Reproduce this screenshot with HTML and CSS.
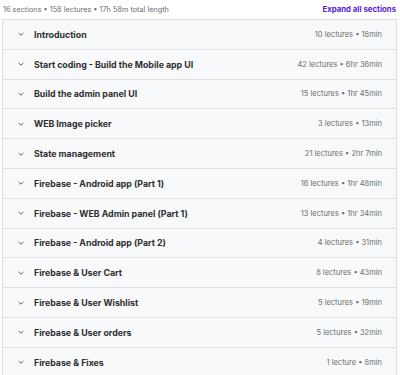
FILE: index.html
```html
<!DOCTYPE html>
<html lang="en">
<head>
    <meta charset="UTF-8">
    <title>Course content</title>
    <link rel="stylesheet" href="styles.css">
</head>
<body>
<div class="curriculum">
    <div class="summary">
        <span>16 sections • 158 lectures • 17h 58m total length</span>
        <button class="expand-all">Expand all sections</button>
    </div>
    <div class="sections">
        <div class="section"><span class="chevron"><svg viewBox="0 0 10 10"><path d="M2.6 4 L5 6.2 L7.4 4"/></svg></span><span class="title">Introduction</span><span class="meta">10 lectures • 18min</span></div>
        <div class="section"><span class="chevron"><svg viewBox="0 0 10 10"><path d="M2.6 4 L5 6.2 L7.4 4"/></svg></span><span class="title">Start coding - Build the Mobile app UI</span><span class="meta">42 lectures • 6hr 36min</span></div>
        <div class="section"><span class="chevron"><svg viewBox="0 0 10 10"><path d="M2.6 4 L5 6.2 L7.4 4"/></svg></span><span class="title">Build the admin panel UI</span><span class="meta">15 lectures • 1hr 45min</span></div>
        <div class="section"><span class="chevron"><svg viewBox="0 0 10 10"><path d="M2.6 4 L5 6.2 L7.4 4"/></svg></span><span class="title">WEB Image picker</span><span class="meta">3 lectures • 13min</span></div>
        <div class="section"><span class="chevron"><svg viewBox="0 0 10 10"><path d="M2.6 4 L5 6.2 L7.4 4"/></svg></span><span class="title">State management</span><span class="meta">21 lectures • 2hr 7min</span></div>
        <div class="section"><span class="chevron"><svg viewBox="0 0 10 10"><path d="M2.6 4 L5 6.2 L7.4 4"/></svg></span><span class="title">Firebase - Android app (Part 1)</span><span class="meta">16 lectures • 1hr 48min</span></div>
        <div class="section"><span class="chevron"><svg viewBox="0 0 10 10"><path d="M2.6 4 L5 6.2 L7.4 4"/></svg></span><span class="title">Firebase - WEB Admin panel (Part 1)</span><span class="meta">13 lectures • 1hr 34min</span></div>
        <div class="section"><span class="chevron"><svg viewBox="0 0 10 10"><path d="M2.6 4 L5 6.2 L7.4 4"/></svg></span><span class="title">Firebase - Android app (Part 2)</span><span class="meta">4 lectures • 31min</span></div>
        <div class="section"><span class="chevron"><svg viewBox="0 0 10 10"><path d="M2.6 4 L5 6.2 L7.4 4"/></svg></span><span class="title">Firebase &amp; User Cart</span><span class="meta">8 lectures • 43min</span></div>
        <div class="section"><span class="chevron"><svg viewBox="0 0 10 10"><path d="M2.6 4 L5 6.2 L7.4 4"/></svg></span><span class="title">Firebase &amp; User Wishlist</span><span class="meta">5 lectures • 19min</span></div>
        <div class="section"><span class="chevron"><svg viewBox="0 0 10 10"><path d="M2.6 4 L5 6.2 L7.4 4"/></svg></span><span class="title">Firebase &amp; User orders</span><span class="meta">5 lectures • 32min</span></div>
        <div class="section"><span class="chevron"><svg viewBox="0 0 10 10"><path d="M2.6 4 L5 6.2 L7.4 4"/></svg></span><span class="title">Firebase &amp; Fixes</span><span class="meta">1 lecture • 8min</span></div>
    </div>
</div>
</body>
</html>
```

FILE: styles.css
```css
body {
    margin: 0;
    padding: 0;
    background-color: #ffffff;
    font-family: Inter, "Noto Sans", sans-serif;
    color: #2d2f31;
}

.curriculum {
    padding: 0 3px 0 2px;
}

.summary {
    display: flex;
    justify-content: space-between;
    align-items: center;
    height: 19px;
    font-size: 7.3px;
    color: #6a6f73;
    padding-left: 1px;
    padding-bottom: 1px;
    box-sizing: border-box;
}

.expand-all {
    background: none;
    border: none;
    padding: 0 1px 0 0;
    font-family: inherit;
    font-size: 7.8px;
    font-weight: 700;
    color: #5624d0;
    cursor: pointer;
}

.sections {
    border: 1px solid #dde1e5;
    border-bottom: none;
}

.section {
    display: flex;
    align-items: center;
    height: 29.8px;
    box-sizing: border-box;
    padding: 0 14px 0 13px;
    background-color: #f7f9fa;
    border-bottom: 1px solid #dde1e5;
}

.chevron {
    width: 10px;
    height: 10px;
    margin-right: 8px;
}

.chevron svg {
    display: block;
    width: 10px;
    height: 10px;
    fill: none;
    stroke: #4b4e51;
    stroke-width: 0.9;
}

.title {
    flex: 1;
    font-size: 8.8px;
    font-weight: 700;
    color: #2d2f31;
}

.meta {
    font-size: 7.5px;
    color: #6a6f73;
}
```
